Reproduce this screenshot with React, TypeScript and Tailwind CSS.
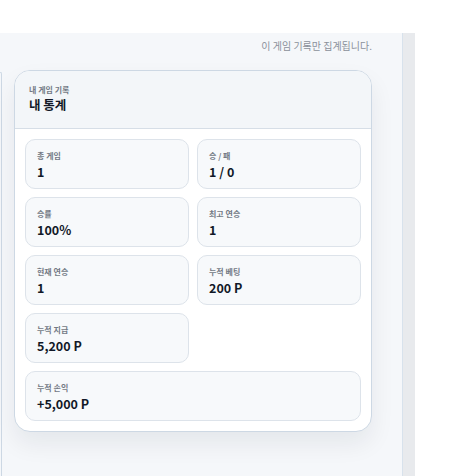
import React from 'react';

const stats = [
  { label: '총 게임', value: '1' },
  { label: '승 / 패', value: '1 / 0' },
  { label: '승률', value: '100%' },
  { label: '최고 연승', value: '1' },
  { label: '현재 연승', value: '1' },
  { label: '누적 베팅', value: '200 P' },
  { label: '누적 지급', value: '5,200 P' },
];

const StatCell = ({ label, value, wide }: { label: string; value: string; wide?: boolean }) => (
  <div
    className={`h-[50px] rounded-[10px] border border-[#dde3ea] bg-[#f7f9fb] px-[11px] pt-[10px] ${
      wide ? 'col-span-2' : ''
    }`}
  >
    <div className="text-[8px] leading-[11px] font-bold text-[#737a85]">{label}</div>
    <div className="mt-[2px] text-[12.5px] leading-[18px] font-bold text-[#111827]">{value}</div>
  </div>
);

export default function App() {
  return (
    <div
      className="w-[455px] h-[476px] bg-white flex flex-col overflow-hidden"
      style={{ fontFamily: '"Noto Sans CJK KR", "Noto Sans", sans-serif' }}
    >
      <div className="h-[33px] shrink-0" />
      <div className="flex flex-1 min-h-0">
        <div className="w-[402px] bg-[#f5f7fa] flex flex-col">
          <div className="pt-[6px] pr-[30px] text-right text-[10px] leading-[14px] text-[#8b919a]">
            이 게임 기록만 집계됩니다.
          </div>
          <div className="flex flex-1 mt-[17px]">
            <div className="w-[2px] mt-[2px] border-r border-t border-[#cdd8e4] rounded-tr-[8px]" />
            <div className="ml-[12px] self-start w-[358px] rounded-[16px] border border-[#cdd8e4] bg-white shadow-[0_12px_24px_rgba(15,23,42,0.07)] overflow-hidden">
              <div className="bg-[#f3f6f9] border-b border-[#d6dee7] px-[14px] pt-[13px] pb-[15px]">
                <div className="text-[8px] leading-[11px] font-bold text-[#737a85]">내 게임 기록</div>
                <div className="mt-[1px] text-[12.5px] leading-[17px] font-bold text-[#111827]">내 통계</div>
              </div>
              <div className="grid grid-cols-2 gap-[8px] p-[10px]">
                {stats.map((s) => (
                  <StatCell key={s.label} label={s.label} value={s.value} />
                ))}
                <div />
                <StatCell label="누적 손익" value="+5,000 P" wide />
              </div>
            </div>
          </div>
        </div>
        <div className="w-[13px] bg-[#e8eaed] border-l border-[#d8e2ec]" />
      </div>
    </div>
  );
}
